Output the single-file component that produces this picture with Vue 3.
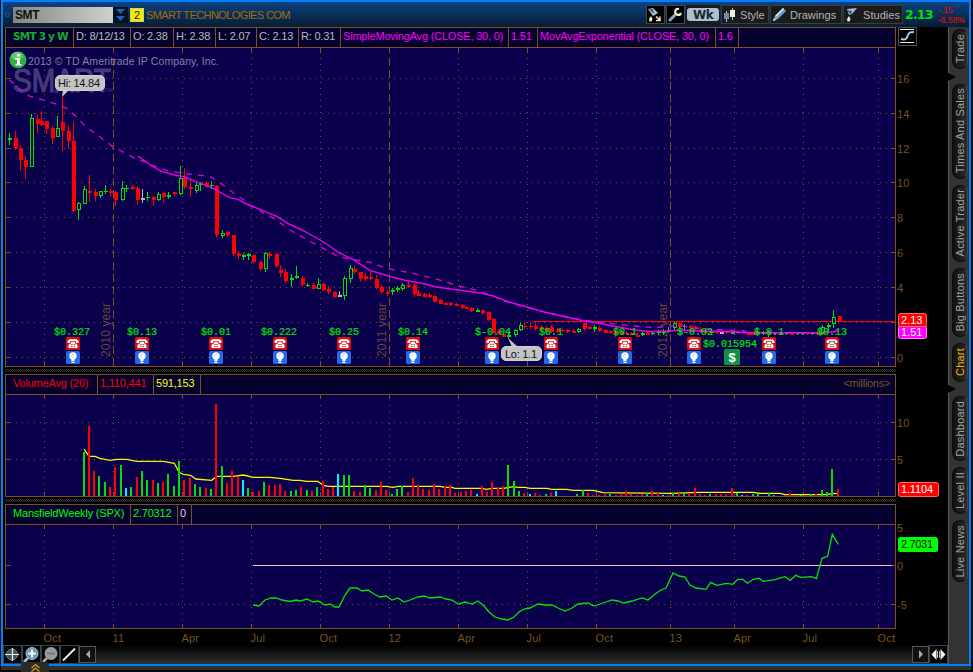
<template>
  <div class="screen">
    <div class="window">
      <header class="title-bar">
        <span class="link-dot"></span>
        <div class="symbol-input">SMT</div>
        <div class="symbol-drop">
          <svg width="15" height="16" viewBox="0 0 15 16">
            <path d="M3 2h9l-4.500 5zM3 9h9l-4.500 5z" fill="#1668b8" />
          </svg>
        </div>
        <div class="link-number">2</div>
        <div class="company">SMART TECHNOLOGIES COM</div>
        <div class="tools">
          <div class="tool square flask">
            <svg width="16" height="16" viewBox="0 0 16 16">
              <path d="M1 2l5-1 5 5-5 3z" fill="#a9c0d2" />
              <path d="M2 2l4 0 1 5z" fill="#41586b" />
              <path d="M4 9l1.500 3-1 2.500h-2L2 12z" fill="#e8f0d0" />
              <path d="M9 9.500l4 4m0-4v4H9" stroke="#f2f2cc" stroke-width="1.500" fill="none" />
            </svg>
          </div>
          <div class="tool square wrench">
            <svg width="16" height="16" viewBox="0 0 16 16">
              <path d="M3 13l6-6" stroke="#8dabc4" stroke-width="3" stroke-linecap="round" />
              <path d="M12 2a3 3 0 1 0 2 4" stroke="#f0f0d0" stroke-width="2.200" fill="none" />
            </svg>
          </div>
          <div class="period"><span>Wk</span></div>
          <div class="tool style-btn">
            <svg width="14" height="16" viewBox="0 0 14 16">
              <path d="M3.500 4v11M9.500 1v12" stroke="#a9c7dc" />
              <rect x="1" y="6" width="5" height="6" fill="#6e8ca8" />
              <rect x="7" y="3" width="5" height="7" fill="#e9f2d8" />
            </svg>
            <span>Style</span>
          </div>
          <div class="tool draw-btn">
            <svg width="15" height="16" viewBox="0 0 15 16">
              <path d="M1 14l2-5 8-8 3 3-8 8z" fill="#6c9fcc" />
              <path d="M3 9l8-8 1 1-8 8z" fill="#e6eef4" />
              <path d="M1 14l1-3 2 2z" fill="#f4f0c8" />
            </svg>
            <span>Drawings</span>
          </div>
          <div class="tool study-btn">
            <svg width="15" height="16" viewBox="0 0 15 16">
              <path d="M2 2l10-1-5 6-3 1z" fill="#9fbdd4" />
              <path d="M2 3l5 1-1 4z" fill="#405668" />
              <path d="M4 9l1.500 3-1 2.500h-2L2 12z" fill="#e8f0d0" />
            </svg>
            <span>Studies</span>
          </div>
        </div>
        <div class="last">2.13</div>
        <div class="change"><span>-.15</span><span>-6.58%</span></div>
      </header>

      <div class="body">
        <main class="charts">
          <div class="info-row">
            <div class="info">
              <div v-for="c in priceInfo" :key="c.text" :class="['cell', c.tone]" :style="{ width: c.w + 'px' }">{{ c.text }}</div>
            </div>
            <div class="curve-btn">
              <svg width="17" height="16" viewBox="0 0 17 16">
                <path d="M1 1.500h14M1 14.500h14" stroke="#f0f0d0" />
                <path d="M2 11c5 1.500 6-1 7-4s3-3 6-3" stroke="#9ed0f5" stroke-width="2" fill="none" />
              </svg>
            </div>
          </div>

          <svg class="plot" width="943" height="320" viewBox="5 47 943 320">
            <rect x="5.500" y="47.500" width="890" height="319" class="area" />
            <text x="13" y="92" class="mark" textLength="98" lengthAdjust="spacingAndGlyphs">SMART</text>
            <text x="104" y="92" class="mark-tm">TM</text>
            <g class="grid">
              <path v-for="y in priceRows" :key="'h' + y.y" :d="`M10 ${y.y + 0.5}H890`" class="dots" />
              <path v-for="x in columns" :key="'v' + x" :d="`M${x + 0.5} 58V361`" :class="years[x] ? 'dashes' : 'dots'" />
              <path v-for="x in columns" :key="'t' + x" :d="`M${x + 0.5} 48v5M${x + 0.5} 361v5`" />
              <path v-for="y in priceRows" :key="'r' + y.y" :d="`M6 ${y.y + 0.5}h5M891 ${y.y + 0.5}h5`" />
            </g>
            <text v-for="(label, x) in years" :key="label" class="year" :transform="`translate(${+x - 3} 357) rotate(-90)`" textLength="54">{{ label }}</text>
            <text v-for="y in priceRows" :key="'l' + y.y" x="897" :y="y.y + 4.500" class="axis">{{ y.text }}</text>
            <path d="M533 321.500H895" stroke="#f00" class="crisp" />
            <g class="crisp">
              <template v-for="(c, i) in candles" :key="i">
                <rect :x="c.x" :y="c.high" width="1" :height="c.low - c.high" :fill="c.color" />
                <rect v-if="c.hollow" :x="c.x - 0.5" :y="c.top + 0.5" width="3" :height="Math.max(c.bottom - c.top - 1, 1)" fill="#0a004c" :stroke="c.color" />
                <rect v-else :x="c.x - 1" :y="c.top" width="4" :height="Math.max(c.bottom - c.top, 1)" :fill="c.color" />
              </template>
            </g>
            <polyline :points="ema" class="ema" />
            <polyline :points="sma" class="sma" />

            <text x="28" y="65" class="copyright" textLength="191">2013 © TD Ameritrade IP Company, Inc.</text>
            <circle cx="18" cy="60" r="8.500" fill="#2fae43" />
            <ellipse cx="17" cy="56" rx="6" ry="4" fill="#7fd68a" opacity=".65" />
            <path d="M17 54h3v2.500h-3zM15 58h5v6h1.500v1.500h-6V64H17v-4.500h-2z" fill="#fff" />

            <path d="M62 97l1-8h7z" fill="#c4c4c4" />
            <rect x="55.500" y="75.500" width="49" height="15" rx="4.500" class="bubble" />
            <text x="58" y="87" class="bubble-text" textLength="42">Hi: 14.84</text>

            <g v-for="e in events" :key="e.x">
              <text :x="e.tx" y="335" class="eps">{{ e.text }}</text>
              <g :transform="`translate(${e.x - 7} 337)`">
                <rect width="14" height="13" rx="1.500" fill="#dd0d0d" />
                <path d="M1.500 6V4L3.500 2.300h7L12.500 4v2H10V4.300H4V6z" fill="#fff" />
                <path d="M5 5h4v1l2.500 2v3h-9V8L5 6z" fill="#fff" />
                <path d="M5 7.500h1m.500 0h1m.500 0h1M5 9.500h1m.500 0h1m.500 0h1" stroke="#d33" />
              </g>
              <g :transform="`translate(${e.x - 7} 351)`">
                <rect width="14" height="13" rx="1.500" fill="#216be6" />
                <circle cx="7" cy="5" r="3.700" fill="#fff" />
                <rect x="5.500" y="8" width="3" height="4" fill="#fff" />
                <path d="M6 10.500h3" stroke="#216be6" stroke-width=".6" />
                <path d="M6 6V3.500h2" stroke="#b7d0f8" fill="none" />
              </g>
            </g>
            <text x="703" y="347" class="eps">$0.015954</text>
            <rect x="724" y="349" width="16" height="16" rx="1.500" fill="#109341" />
            <text x="732" y="361.500" class="dollar">$</text>

            <path d="M508 338l10 9h-6z" fill="#c4c4c4" />
            <rect x="501.500" y="346.500" width="40" height="14" rx="4.500" class="bubble" />
            <text x="505" y="358" class="bubble-text" textLength="32">Lo: 1.1</text>

            <rect x="898.500" y="325.500" width="28" height="13" rx="2" fill="#f0f" stroke="#ff80ff" />
            <text x="901" y="335.500" class="tag-text">1.51</text>
            <rect x="898.500" y="313.500" width="28" height="13" rx="2" fill="#f00" stroke="#ff6a5a" />
            <text x="901" y="324" class="tag-text">2.13</text>
          </svg>

          <div class="splitter"></div>

          <div class="info-row">
            <div class="info">
              <div v-for="c in volumeInfo" :key="c.text" :class="['cell', c.tone]" :style="{ width: c.w + 'px' }">{{ c.text }}</div>
              <div class="unit">&lt;millions&gt;</div>
            </div>
          </div>
          <svg class="plot" width="943" height="103" viewBox="5 394 943 103">
            <rect x="5.500" y="394.500" width="890" height="102" class="area" />
            <g class="grid">
              <path v-for="y in volumeRows" :key="y.y" :d="`M10 ${y.y + 0.5}H890`" class="dots" />
              <path v-for="x in columns" :key="'v' + x" :d="`M${x + 0.5} 405V491`" class="dots" />
              <path v-for="x in columns" :key="'t' + x" :d="`M${x + 0.5} 395v4M${x + 0.5} 492v4`" />
              <path v-for="y in volumeRows" :key="'r' + y.y" :d="`M6 ${y.y + 0.5}h5M891 ${y.y + 0.5}h5`" />
            </g>
            <polyline :points="volumeAvg" class="avg" />
            <rect v-for="(b, i) in volume" :key="i" :x="b.x - 1" :y="b.y" width="2" :height="496 - b.y" :fill="b.color" class="crisp" />
            <text v-for="y in volumeRows" :key="'l' + y.y" x="897" :y="y.y + 4.500" class="axis">{{ y.text }}</text>
            <rect x="898.500" y="482.500" width="40" height="14" rx="2" fill="#f00" stroke="#ff6a5a" />
            <text x="901" y="493" class="tag-text" textLength="32">1.1104</text>
          </svg>

          <div class="splitter"></div>

          <div class="info-row">
            <div class="info">
              <div v-for="c in mansfieldInfo" :key="c.text" :class="['cell', c.tone]" :style="{ width: c.w + 'px' }">{{ c.text }}</div>
            </div>
          </div>
          <svg class="plot" width="943" height="121" viewBox="5 524 943 121">
            <rect x="5.500" y="524.500" width="890" height="104" class="area" />
            <g class="grid">
              <path d="M10 604.500H890" class="dots" />
              <path v-for="x in columns" :key="'v' + x" :d="`M${x + 0.5} 535V623`" class="dots" />
              <path v-for="x in columns" :key="'t' + x" :d="`M${x + 0.5} 525v4M${x + 0.5} 624v4`" />
              <path d="M6 604.500h5M891 604.500h5M891 565.500h5M6 565.500h5" />
            </g>
            <path d="M253 565.500H892" stroke="#ffc0cb" class="crisp" />
            <polyline :points="mansfield" class="strength" />
            <text x="897" y="532" class="axis">5</text>
            <text x="897" y="570" class="axis">0</text>
            <text x="897" y="609" class="axis">-5</text>
            <rect x="898" y="537" width="40" height="15" rx="2.500" fill="#0f0" />
            <text x="901" y="548" class="tag-text dark" textLength="32">2.7031</text>
            <text v-for="(m, i) in months" :key="i" :x="columns[i] - 0.5" y="642" class="axis">{{ m }}</text>
          </svg>

          <footer class="toolbar">
            <div class="bar-btn">
              <svg width="17" height="17" viewBox="0 0 17 17">
                <circle cx="8" cy="8.500" r="5.500" fill="#3d5265" stroke="#6d879d" />
                <path d="M1 8.500h14M8.500 2v13" stroke="#eef2d0" stroke-width="1.200" />
              </svg>
            </div>
            <div class="bar-btn">
              <svg width="17" height="17" viewBox="0 0 17 17">
                <path d="M1 16l4-4" stroke="#9ebed8" stroke-width="2.500" />
                <circle cx="9" cy="7.500" r="6" fill="#6a97bd" stroke="#a9c6dd" />
                <path d="M5 7.500h8M9 3.500v8" stroke="#f8f8e4" stroke-width="2" />
              </svg>
            </div>
            <div class="bar-btn">
              <svg width="17" height="17" viewBox="0 0 17 17">
                <path d="M1 16l4-4" stroke="#aaa" stroke-width="2.500" />
                <circle cx="9" cy="7.500" r="6.500" fill="#9b9b9b" />
                <path d="M5 7.500h8" stroke="#777" stroke-width="2" />
              </svg>
            </div>
            <div class="bar-btn">
              <svg width="17" height="17" viewBox="0 0 17 17">
                <path d="M2 14.500L14 2.500" stroke="#f2f5d8" stroke-width="1.800" />
              </svg>
            </div>
            <div class="bar-btn scroll">
              <svg width="15" height="15" viewBox="0 0 15 15"><path d="M10 3v8.500L6 7.200z" fill="#aaa" /></svg>
            </div>
            <div class="bar-btn scroll right">
              <svg width="15" height="15" viewBox="0 0 15 15"><path d="M6 3v8.500l4-4.300z" fill="#aaa" /></svg>
            </div>
            <div class="bar-btn last-btn">
              <svg width="17" height="17" viewBox="0 0 17 17">
                <path d="M6.500 3v11L1.500 8.500zM10.500 3v11l5-5.500z" fill="#f2f5d8" />
                <path d="M7.500 5v7M9.500 5v7" stroke="#9ab8cf" />
              </svg>
            </div>
          </footer>
        </main>

        <aside class="side">
          <template v-for="t in tabs" :key="t.text">
            <div :class="['tab', { active: t.active }]" :style="{ height: t.h + 'px' }"><span>{{ t.text }}</span></div>
            <svg v-if="t.notch" class="notch" width="9" height="14" viewBox="0 0 9 14">
              <path d="M0 3l8 4-8 4z" fill="#000" />
            </svg>
          </template>
        </aside>
      </div>
    </div>
    <div class="pull-tab">
      <svg width="11" height="9" viewBox="0 0 11 9">
        <path d="M1.500 5l4-3.500 4 3.500M1.500 8.500l4-3.500 4 3.500" stroke="#d9a514" stroke-width="1.200" fill="none" />
      </svg>
    </div>
  </div>
</template>

<script setup>
const priceInfo = [
  { text: 'SMT 3 y W', w: 68, tone: 'title' },
  { text: 'D: 8/12/13', w: 57, tone: 'plain' },
  { text: 'O: 2.38', w: 43, tone: 'plain' },
  { text: 'H: 2.38', w: 42, tone: 'plain' },
  { text: 'L: 2.07', w: 41, tone: 'plain' },
  { text: 'C: 2.13', w: 42, tone: 'plain' },
  { text: 'R: 0.31', w: 42, tone: 'plain' },
  { text: 'SimpleMovingAvg (CLOSE, 30, 0)', w: 168, tone: 'pink' },
  { text: '1.51', w: 29, tone: 'pink' },
  { text: 'MovAvgExponential (CLOSE, 30, 0)', w: 178, tone: 'pink' },
  { text: '1.6', w: 23, tone: 'pink' }
]
const volumeInfo = [
  { text: 'VolumeAvg (20)', w: 92, tone: 'red first' },
  { text: '1,110,441', w: 56, tone: 'red' },
  { text: '591,153', w: 47, tone: 'yellow' }
]
const mansfieldInfo = [
  { text: 'MansfieldWeekly (SPX)', w: 125, tone: 'green first' },
  { text: '2.70312', w: 47, tone: 'green' },
  { text: '0', w: 14, tone: 'rose' }
]

const tabs = [
  { text: 'Trade', h: 40, notch: true },
  { text: 'Times And Sales', h: 95 },
  { text: 'Active Trader', h: 77 },
  { text: 'Big Buttons', h: 69 },
  { text: 'Chart', h: 39, notch: true, active: true },
  { text: 'Dashboard', h: 65 },
  { text: 'Level II', h: 47 },
  { text: 'Live News', h: 62 }
]

const columns = [44, 113, 182, 251, 320, 389, 458, 527, 596, 670, 734, 803, 878]
const months = ['Oct', '11', 'Apr', 'Jul', 'Oct', '12', 'Apr', 'Jul', 'Oct', '13', 'Apr', 'Jul', 'Oct']
const years = { 113: '2010 year', 389: '2011 year', 670: '2012 year' }
const priceRows = [78, 113, 148, 182, 217, 252, 287, 322, 357].map((y, i) => ({ y, text: i === 7 ? '' : 16 - i * 2 }))
const volumeRows = [{ y: 422, text: '10' }, { y: 459, text: '5' }]

const events = [
  { x: 73, tx: 54, text: '$0.327' },
  { x: 142, tx: 127, text: '$0.13' },
  { x: 216, tx: 201, text: '$0.01' },
  { x: 280, tx: 261, text: '$0.222' },
  { x: 344, tx: 329, text: '$0.25' },
  { x: 413, tx: 398, text: '$0.14' },
  { x: 492, tx: 475, text: '$-0.04' },
  { x: 551, tx: 539, text: '$0.1' },
  { x: 625, tx: 613, text: '$0.1' },
  { x: 694, tx: 677, text: '$-0.02' },
  { x: 769, tx: 754, text: '$-0.1' },
  { x: 832, tx: 817, text: '$0.13' }
]

const colors = { g: '#00e100', h: '#00e100', r: '#f00', w: '#b8b8b8', c: '#00f0ff' }

// candle strips: x, high, body top, body bottom, low, kind - in thirds of a pixel from the strip's origin
const strips = [
  { ox: 0, oy: 125, rows: `28 25 40 45 60 g|45 18 40 69 75 r|62 60 69 105 137 r|77 93 105 125 161 r|93 -33 -20 125 126 h|111 -30 -18 -3 25 r|125 -42 -12 0 4 r|140 -12 -12 12 27 r|157 3 9 38 56 r|173 -27 9 35 36 h|188 -84 -9 18 77 r|206 3 18 48 72 r|221 -10 48 258 261 r|236 230 235 256 285 h|254 183 193 236 238 h|268 150 198 203 232 r|285 192 201 213 228 r|300 197 199 212 219 h|317 180 197 200 207 g|331 192 198 204 213 r|347 198 201 225 243 r|366 168 190 224 228 h|380 180 188 192 201 g|396 180 186 191 195 r|413 184 190 225 240 r|428 192 219 224 234 w|443 200 216 220 228 g|460 213 216 225 243 r|476 200 208 224 228 h|491 203 205 216 234 r|506 201 210 216 222 g|524 201 201 207 213 r|540 122 160 206 209 h|553 129 156 186 192 r|571 165 186 191 215 r|588 170 181 197 203 h|602 172 175 180 197 g|620 168 174 184 189 r|634 168 179 183 192 g|650 180 184 329 335 r|668 315 324 332 339 h|683 318 321 330 336 r|699 330 330 387 393 r|716 378 384 393 402 r|731 384 391 396 402 g` },
  { ox: 245, oy: 200, rows: `-4 160 165 169 180 g|10 159 163 168 180 g|26 165 165 186 189 r|45 183 186 207 213 r|60 156 160 206 216 h|74 156 162 168 177 r|93 159 162 198 204 r|106 195 209 219 231 r|122 207 216 243 249 r|140 222 235 240 261 g|155 198 229 234 237 g|171 227 234 255 261 r|188 249 254 258 261 g|204 249 255 267 267 r|219 234 253 266 268 h|236 249 252 269 273 r|251 258 267 276 282 r|267 273 276 290 291 r|282 273 286 291 291 w|299 228 235 288 300 h|315 195 205 236 249 h|328 198 207 216 222 r|347 216 216 237 246 r|362 219 228 237 243 r|377 210 231 237 240 r|395 225 237 264 267 r|410 255 261 276 282 r|426 270 275 281 287 r|442 264 270 276 285 g|457 258 264 269 275 g|473 249 256 266 273 h|491 243 255 261 264 r|507 249 255 282 291 r|521 270 279 288 288 r|537 279 282 291 291 r|554 279 285 291 295 r|569 285 288 306 306 r|585 297 300 312 312 r|602 305 309 315 316 r|617 305 310 316 318 r|633 309 312 318 318 r|651 312 315 324 328 r|665 318 321 327 328 r|680 321 323 333 336 r|698 323 330 335 336 g|713 330 330 338 345 r|729 336 336 360 363 r|744 354 357 399 402 r|760 388 394 402 403 r` },
  { ox: 495, oy: 270, rows: `25 189 191 200 201 r|41 190 194 202 207 g|60 177 181 195 201 h|75 160 166 180 183 h|89 156 167 172 178 r|106 156 167 172 178 r|122 155 167 177 183 r|138 165 171 176 183 r|154 168 173 183 186 r|170 165 172 187 190 r|187 174 179 186 190 r|202 178 180 184 186 r|218 177 180 186 188 r|234 178 182 188 190 r|249 174 176 187 190 h|267 159 159 177 183 r|283 168 172 177 180 r|298 166 171 178 187 g|313 168 174 182 186 r|330 178 180 188 190 r|346 180 184 190 192 r|362 180 182 190 200 r|378 180 186 192 195 r|394 184 188 193 196 r|410 186 188 194 196 r|426 190 194 200 202 r|441 186 189 196 197 h|457 186 190 194 196 r|473 183 188 193 196 g|489 180 186 190 195 g|505 178 184 190 196 g|521 172 180 186 190 g|537 156 159 175 180 h|552 153 159 171 174 r|569 162 167 171 180 g|585 165 167 175 178 r|600 168 172 178 180 r|616 172 176 184 188 r|632 178 182 188 190 r|649 178 184 190 194 g|665 182 184 190 192 r` },
  { ox: 720, oy: 270, rows: `5 186 186 191 191 w|20 185 185 190 191 r|37 184 184 192 192 g|53 184 184 190 190 r|69 180 185 190 190 g|84 186 186 195 195 r|97 186 187 194 194 r|112 174 186 191 199 g|131 184 187 192 194 g|146 181 187 192 200 g|162 186 187 192 194 r|180 186 188 192 196 g|198 186 187 192 194 g|213 187 190 195 196 r|231 187 189 193 195 g|246 186 189 193 195 g|262 187 189 193 195 r|278 186 188 193 195 g|292 184 187 193 195 r|306 165 170 192 195 h|324 159 166 171 186 g|339 120 142 163 175 h|357 138 138 153 153 r` }
]

const candles = strips.flatMap(s =>
  s.rows.split('|').map(row => {
    const [x, ...rest] = row.split(' ')
    const [high, top, bottom, low] = rest.slice(0, 4).map(v => Math.round(s.oy + v / 3))
    const kind = rest[4]
    return { x: Math.floor(s.ox + x / 3), high, top, bottom, low, hollow: kind === 'h', color: colors[kind] }
  })
)

const trace = parts =>
  parts
    .map(([ox, oy, pts]) => pts.split(' ').map(p => {
      const [x, y] = p.split(',')
      return `${(ox + x / 3).toFixed(1)},${(oy + y / 3).toFixed(1)}`
    }).join(' '))
    .join(' ')

const sma = trace([
  [0, 125, '415,93 430,105 455,123 485,139 520,149 555,156 585,169 635,188 670,207 690,218 715,223 735,235'],
  [245, 200, '5,12 40,26 95,49 130,71 170,90 210,111 250,135 280,157 325,179 375,211 430,228 480,241 530,250 570,260 640,270 710,280 745,288'],
  [495, 270, '0,80 45,97 97,111 150,127 200,138 265,152 310,160 370,171 420,180 465,185 530,182 575,181 615,184'],
  [720, 270, '0,184 80,188 160,188 300,188 355,184']
])
const ema = trace([
  [0, 0, '28,240 50,258 72,280 90,289 130,300 165,311 203,326 230,352'],
  [0, 125, '260,8 290,28 340,66 400,97 455,120 500,136 555,146 610,152 635,157 665,177 700,203 735,227'],
  [245, 200, '10,14 45,33 90,58 140,93 200,127 240,148 275,167 300,174 370,186 430,206 500,219 570,236 640,257 700,272 745,288'],
  [495, 270, '0,81 30,94 97,113 200,137 265,150 340,160 420,168 480,173 560,166 590,174 650,178'],
  [720, 270, '0,179 60,182 130,188']
])

const volumeStrips = [
  { ox: 0, oy: 365, rows: `252 261 g|267 183 r|282 318 r|297 333 g|315 351 g|330 366 r|345 306 r|363 300 g|378 369 c|393 366 g|411 336 r|426 318 g|441 345 g|459 345 r|474 354 g|489 351 r|504 327 g|522 363 g|537 288 g|552 345 r|570 339 r|585 357 g|600 366 g|618 369 r|633 372 g|648 117 r|666 303 g|681 354 r|696 318 r|714 336 r|729 345 c|744 369 g|759 381 r|777 378 r|792 351 g|807 360 r|825 360 r|840 357 r|855 378 r|873 378 g|888 375 g` },
  { ox: 300, oy: 365, rows: `3 366 r|21 375 g|36 378 r|51 366 g|69 348 r|84 372 r|99 366 r|114 327 c|132 330 g|147 330 g|162 378 r|180 381 r|195 360 g|210 369 g|228 375 r|243 351 r|258 375 r|276 387 g|291 372 g|306 363 g|324 381 r|339 339 r|354 360 r|369 372 r|387 375 r|402 357 r|417 372 r|435 363 r|450 360 r|465 384 r|483 381 r|498 378 r|513 375 r|531 387 c|546 363 r|561 381 r|576 351 r|594 369 r|609 363 r|624 300 g|642 348 g|657 378 g|672 384 r|690 387 c|705 384 r|720 390 r|738 387 g|753 384 r|768 378 c|831 387 g|849 375 g|864 384 r|879 390 r|897 390 r` },
  { ox: 600, oy: 480, rows: `16 42 r|31 42 g|47 44 r|62 42 r|78 34 r|93 42 r|110 44 r|126 42 r|142 40 g|157 34 r|173 40 r|189 44 c|205 44 r|220 38 g|236 40 r|252 42 g|268 40 r|284 24 r|300 42 r` },
  { ox: 700, oy: 480, rows: `16 44 r|30 42 g|48 42 r|63 42 r|78 42 r|96 24 r|111 40 g|126 44 c|141 44 r|159 42 g|174 42 g|207 40 g|222 44 g|255 44 r|270 39 r|286 44 r|302 44 g|318 44 r|333 42 g|349 41 r|366 30 g|381 36 g|397 -33 g|415 27 r` }
]
const volume = volumeStrips.flatMap(s =>
  s.rows.split('|').map(row => {
    const [x, y, kind] = row.split(' ')
    return { x: Math.round(s.ox + x / 3), y: Math.round(s.oy + y / 3), color: colors[kind] }
  })
)
const volumeAvg = trace([
  [0, 365, '252,252 267,274 285,274 300,280 330,286 350,283 380,283 410,289 490,289 523,295 537,322 550,328 572,331 587,342 635,346 650,334 700,334 730,330 760,337 810,337 840,340 880,346'],
  [300, 365, '0,346 20,349 53,349 70,361 85,364 260,364 278,367 295,364 420,364 435,367 455,367 465,370 545,370 560,373 575,370 610,370 640,365 655,367 675,367 690,370 740,370 755,373 800,373 820,376 880,376 910,383'],
  [700, 480, '-90,40 0,37 160,37 180,40 240,40 255,44 380,44 395,41 415,40']
])

const mansfield = '253,605 259,606 265,600 271,598 276,598 282,600 290,601.5 296,600 300,601 307,599 313,602 318,601 325,605 330,604 335,607 339,607 345,595 350,588 357,588 362,591 368,590 374,594 380,597 386,596 392,600 398,598 404,602 410,600 418,597 424,596 430,598 440,597 446,599 452,600 458,604 465,602 472,604 478,601 484,606 489,612 495,617 502,619 508,620 514,617 519,612 524,609 530,608 538,604 545,605 552,605 558,608 565,611 572,608 578,604 588,603 594,606 600,604 606,602 612,600 618,601 624,603 632,601 642,598 648,600 655,594 661,590 666,588 673,573 679,576 685,577 690,585 696,588 ' +
  trace([[700, 480, '18,328 32,307 50,316 80,310 98,313 113,298 128,298 142,310 160,298 177,295 190,304 225,299 255,290 271,301 287,286 302,292 335,290 349,296 366,235 383,229 397,163 415,193']])
</script>

<style>
body {
  background: #000;
}
</style>

<style scoped>
.screen {
  width: 973px;
  height: 672px;
  overflow: hidden;
  position: relative;
  background: linear-gradient(#303030, #303030) 1px 666px / 970px 4px no-repeat #0a0a0a;
  font-family: "Liberation Sans", Arial, sans-serif;
  font-size: 11px;
}

.window {
  width: 970px;
  height: 666px;
  margin-left: 1px;
  box-sizing: border-box;
  border: 2px solid #0080ff;
  background: #000;
}

.title-bar {
  height: 25px;
  display: flex;
  align-items: center;
  background: linear-gradient(#0d4280, #0a3058 50%, #061c36);
}

.link-dot {
  width: 3px;
  height: 3px;
  margin: 0 4px 0 2px;
  border: 1px solid #1560b8;
  border-radius: 50%;
}

.symbol-input {
  width: 100px;
  height: 16px;
  margin-left: -1px;
  line-height: 17px;
  text-indent: 2px;
  background: linear-gradient(90deg, #858585, #d0d0d0);
  color: #111;
  font-size: 12px;
  font-weight: bold;
  letter-spacing: -0.4px;
}

.symbol-drop {
  width: 15px;
  height: 16px;
  background: #06101e;
}

.link-number {
  width: 14px;
  height: 14px;
  margin-left: 2px;
  line-height: 13px;
  text-align: center;
  background: #f4ec00;
  border: 1px solid #d8d070;
  box-sizing: border-box;
  color: #222;
}

.company {
  margin-left: 2px;
  color: #a56b08;
  letter-spacing: -0.6px;
  flex: 1;
  white-space: nowrap;
}

.tools {
  display: flex;
  gap: 1px;
  color: #b4b4b4;
}

.tool {
  height: 19px;
  box-sizing: border-box;
  border: 1px solid #3b3b3b;
  background: #1b1b1b;
  display: flex;
  align-items: center;
  gap: 3px;
  padding-left: 1px;
}

.tool span {
  letter-spacing: 0.05px;
}

.square {
  width: 19px;
  background: #000;
  border-color: #40464c;
  padding: 0;
}

.style-btn {
  width: 48px;
}

.draw-btn {
  width: 72px;
}

.study-btn {
  width: 60px;
}

.period {
  width: 34px;
  height: 19px;
  background: #1b1b1b;
  box-sizing: border-box;
  padding: 3px 1px;
}

.period span {
  display: block;
  height: 13px;
  line-height: 14px;
  border-radius: 3px;
  text-align: center;
  background: #a9bfd2;
  color: #20252a;
  font-family: "DejaVu Sans", sans-serif;
  font-size: 12px;
  font-weight: bold;
  letter-spacing: -0.5px;
}

.last {
  width: 33px;
  margin-left: 2px;
  color: #00e100;
  font-family: "DejaVu Sans", sans-serif;
  font-size: 12.5px;
  font-weight: bold;
  letter-spacing: -0.8px;
}

.change {
  width: 31px;
  display: flex;
  flex-direction: column;
  color: #f00;
  font-size: 8.5px;
  line-height: 10px;
}

.body {
  height: 637px;
  display: flex;
}

.charts {
  width: 943px;
  padding-left: 2px;
}

.info-row {
  display: flex;
  height: 20px;
  gap: 2px;
}

.info {
  width: 891px;
  box-sizing: border-box;
  display: flex;
  border: 1px solid #7b5120;
  border-bottom: 0;
  background: #05002e;
}

.cell {
  box-sizing: border-box;
  flex: none;
  padding-left: 2px;
  line-height: 17px;
  border-right: 1px solid #7b5120;
  white-space: nowrap;
  letter-spacing: -0.2px;
}

.title {
  padding-left: 7px;
  color: #0fae2c;
  font-family: "DejaVu Sans", sans-serif;
  font-size: 10.5px;
  font-weight: bold;
  letter-spacing: -0.8px;
}

.first {
  padding-left: 7px;
}

.plain {
  color: #b9b9b9;
}

.pink {
  color: #f0f;
}

.red {
  color: #f00;
}

.yellow {
  color: #ff0;
}

.green {
  color: #0f0;
}

.rose {
  color: #ffc0cb;
}

.unit {
  margin-left: auto;
  padding-right: 5px;
  line-height: 17px;
  letter-spacing: -0.3px;
  color: #7b5120;
}

.curve-btn {
  width: 17px;
  height: 17px;
  border: 1px solid #4a4f56;
}

.plot {
  display: block;
}

.splitter {
  width: 891px;
  height: 7px;
  background: repeating-conic-gradient(#3a3a3a 0 25%, #000 0 50%) 0 0 / 2px 2px;
  box-shadow: inset 0 2px #000, inset 0 -2px #000;
}

.area {
  fill: #0a004c;
  stroke: #7b5120;
  shape-rendering: crispEdges;
}

.grid {
  stroke: #7b5120;
  fill: none;
  shape-rendering: crispEdges;
}

.dots {
  stroke-dasharray: 1 5;
}

.dashes {
  stroke-dasharray: 8 4;
}

.crisp {
  shape-rendering: crispEdges;
}

.sma {
  fill: none;
  stroke: #e800e8;
  stroke-width: 1.4;
}

.ema {
  fill: none;
  stroke: #dc00e0;
  stroke-width: 1.3;
  stroke-dasharray: 6 6;
}

.avg {
  fill: none;
  stroke: #f8f800;
  stroke-width: 1.3;
}

.strength {
  fill: none;
  stroke: #00e600;
  stroke-width: 1.3;
}

.axis {
  fill: #7b5120;
  letter-spacing: 0.2px;
}

.year {
  fill: #6b4630;
  font-size: 12px;
}

.mark {
  fill: #443b7c;
  stroke: #443b7c;
  stroke-width: 1.2;
  font-size: 33px;
}

.mark-tm {
  fill: #443b7c;
  font-size: 6px;
}

.copyright {
  fill: #8580a5;
  font-size: 10.5px;
}

.bubble {
  fill: #c4c4c4;
  stroke: #d0d0d0;
}

.bubble-text {
  fill: #111;
}

.eps {
  fill: #00e000;
  font-family: "Liberation Mono", monospace;
  font-size: 10px;
  stroke: #00e000;
  stroke-width: 0.2;
}

.dollar {
  fill: #fff;
  font-size: 13px;
  font-weight: bold;
  text-anchor: middle;
}

.tag-text {
  fill: #fff;
}

.dark {
  fill: #111;
}

.toolbar {
  display: flex;
  height: 19px;
  margin-left: -2px;
  background: linear-gradient(#000, #2f2f2f);
}

.bar-btn {
  width: 17px;
  height: 17px;
  border: 1px solid #39434c;
  background: #050505;
  overflow: hidden;
}

.scroll {
  width: 15px;
  height: 15px;
  margin-top: 1px;
  background: #111;
  border-color: #555;
}

.right {
  margin-left: auto;
}

.side {
  width: 20px;
  flex: 1;
  box-sizing: border-box;
  padding: 2px 1px 0 3px;
  border-left: 1px solid #5a5a5a;
  background: #333;
  display: flex;
  flex-direction: column;
  gap: 6px;
}

.tab {
  flex: none;
  box-sizing: border-box;
  width: 16px;
  border: 1px solid #0c0c0c;
  border-right-color: #484848;
  border-radius: 8px;
  background: linear-gradient(90deg, #101010, #2b2b2b);
  color: #a2a2a2;
  display: flex;
  align-items: center;
  justify-content: center;
}

.tab span {
  writing-mode: vertical-rl;
  transform: rotate(180deg);
  font-size: 11px;
  letter-spacing: 0.2px;
  white-space: nowrap;
}

.tab.active {
  color: #f0b400;
}

.notch {
  flex: none;
  margin: -5.5px 0 -6px -4px;
}

.pull-tab {
  position: absolute;
  left: 21px;
  top: 662px;
  width: 28px;
  height: 10px;
  background: #2a2a2a;
  border-radius: 3px 3px 0 0;
  text-align: center;
}
</style>
